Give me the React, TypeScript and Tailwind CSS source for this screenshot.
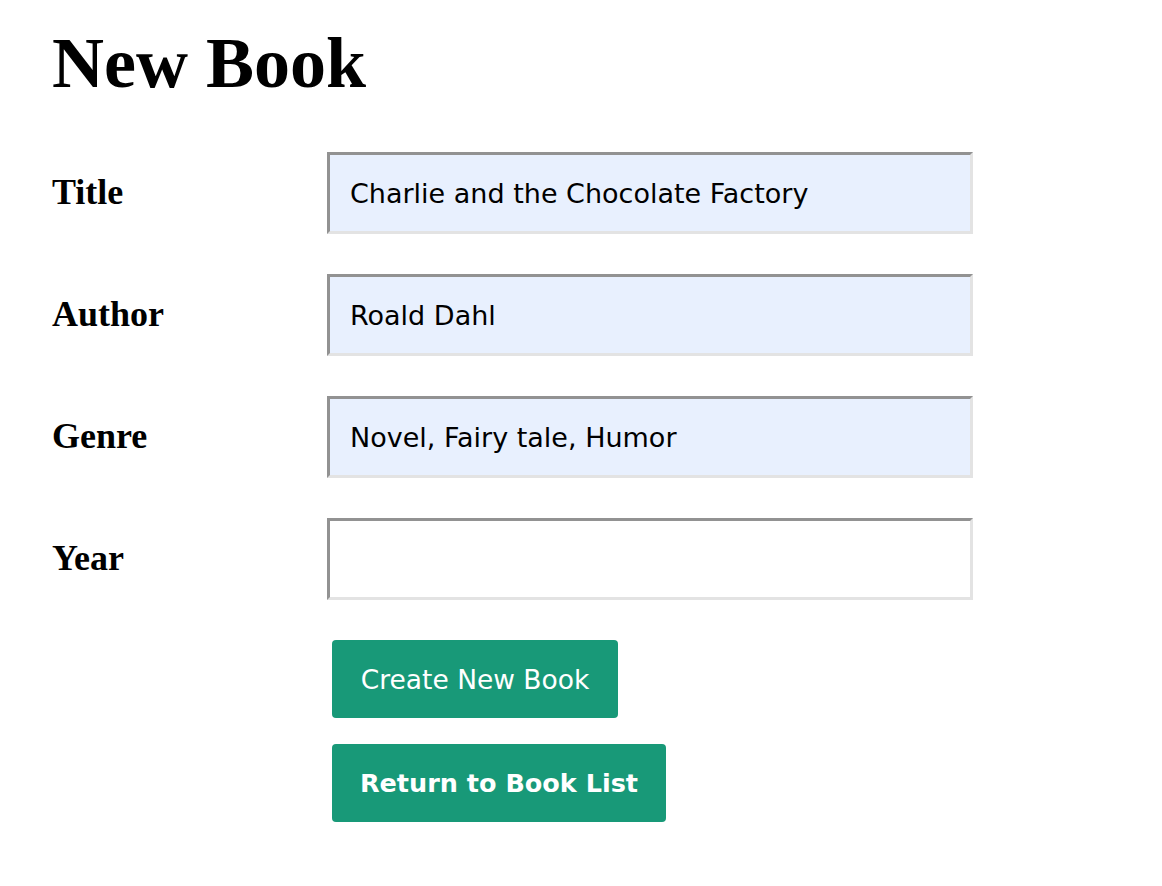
export default function App() {
  const rows = [
    { label: "Title", value: "Charlie and the Chocolate Factory", filled: true },
    { label: "Author", value: "Roald Dahl", filled: true },
    { label: "Genre", value: "Novel, Fairy tale, Humor", filled: true },
    { label: "Year", value: "", filled: false },
  ];
  return (
    <div className="min-h-[886px] w-[1162px] bg-white pl-[52px] pt-[27px] text-black">
      <h1 className="m-0 text-[72px] font-bold leading-[72px] [font-family:'Liberation_Serif',serif]">
        New Book
      </h1>
      <div className="mt-[53px] flex flex-col gap-[40px]">
        {rows.map((r) => (
          <div key={r.label} className="flex h-[82px] items-start">
            <div className="w-[275px] pt-[22px] text-[36px] font-bold leading-[36px] [font-family:'Liberation_Serif',serif]">
              {r.label}
            </div>
            <div
              className={`flex h-[82px] w-[646px] items-center border-[3px] border-t-[#929292] border-l-[#929292] border-b-[#e3e3e3] border-r-[#e3e3e3] pl-[20px] pt-[3px] text-[27px] [font-family:'DejaVu_Sans',sans-serif] ${
                r.filled ? "bg-[#e8f0fe]" : "bg-white"
              }`}
            >
              {r.value}
            </div>
          </div>
        ))}
      </div>
      <div className="mt-[40px] ml-[280px] flex flex-col items-start gap-[26px]">
        <button className="h-[78px] w-[286px] rounded-[4px] bg-[#189978] pt-[1px] text-[26.5px] text-white [font-family:'DejaVu_Sans',sans-serif]">
          Create New Book
        </button>
        <button className="h-[78px] w-[334px] rounded-[4px] bg-[#189978] pt-[1px] text-[25.5px] font-bold text-white [font-family:'DejaVu_Sans',sans-serif]">
          Return to Book List
        </button>
      </div>
    </div>
  );
}
